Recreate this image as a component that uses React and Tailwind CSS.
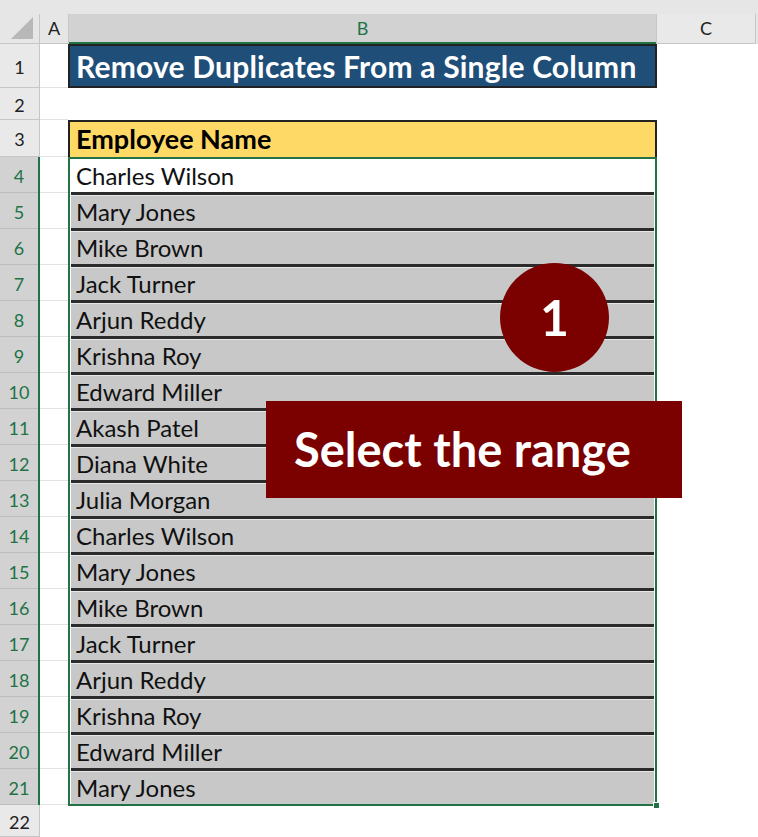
import React from "react";

const names = [
  "Charles Wilson",
  "Mary Jones",
  "Mike Brown",
  "Jack Turner",
  "Arjun Reddy",
  "Krishna Roy",
  "Edward Miller",
  "Akash Patel",
  "Diana White",
  "Julia Morgan",
  "Charles Wilson",
  "Mary Jones",
  "Mike Brown",
  "Jack Turner",
  "Arjun Reddy",
  "Krishna Roy",
  "Edward Miller",
  "Mary Jones",
];

const font = { fontFamily: "Lato, 'Open Sans', sans-serif" };

const RowLabel = ({ n, h, selected }) => (
  <div
    className={`flex items-center justify-center pt-[3px] border-b border-r border-[#c6c6c6] text-[18px] ${h} ${
      selected ? "bg-[#d2d2d2] text-[#217346]" : "bg-[#e9e9e9] text-[#222]"
    }`}
  >
    {n}
  </div>
);

const App = () => {
  return (
    <div className="relative w-[758px] h-[837px] overflow-hidden bg-white" style={font}>
      {/* top strip */}
      <div className="h-[14px] bg-[#e6e6e6]" />

      {/* column headers */}
      <div className="flex h-[30px] text-[18px] text-[#222]">
        <div className="w-[40px] relative bg-[#e6e6e6] border-r border-b border-[#c6c6c6]">
          <div className="absolute right-[6px] bottom-[4px] w-0 h-0 border-l-[22px] border-l-transparent border-b-[22px] border-b-[#b8b8b8]" />
        </div>
        <div className="w-[29px] flex items-center justify-center bg-[#e6e6e6] border-r border-b border-[#c6c6c6]">
          A
        </div>
        <div className="w-[587px] flex items-center justify-center bg-[#d2d2d2] text-[#217346] border-b-2 border-[#217346]">
          B
        </div>
        <div className="w-[100px] flex items-center justify-center bg-[#e9e9e9] border-x border-b border-[#c6c6c6]">
          C
        </div>
        <div className="flex-1 bg-[#e6e6e6]" />
      </div>

      {/* body */}
      <div className="flex">
        {/* row headers */}
        <div className="w-[40px] flex flex-col">
          <RowLabel n={1} h="h-[44px]" />
          <RowLabel n={2} h="h-[32px]" />
          <RowLabel n={3} h="h-[37px]" />
          <div className="border-r-2 border-[#217346] flex flex-col">
            {names.map((_, i) => (
              <div
                key={i}
                className="h-[36px] flex items-center justify-center pt-[4px] bg-[#d2d2d2] text-[#217346] text-[18px] border-b border-[#bdbdbd]"
              >
                {i + 4}
              </div>
            ))}
          </div>
          <RowLabel n={22} h="h-[32px]" />
        </div>

        {/* column A */}
        <div className="w-[28px] flex flex-col">
          <div className="h-[44px] border-b border-[#e2e2e2]" />
          <div className="h-[32px] border-b border-[#e2e2e2]" />
          <div className="h-[37px] border-b border-[#e2e2e2]" />
          {names.map((_, i) => (
            <div key={i} className="h-[36px] border-b border-[#e2e2e2]" />
          ))}
        </div>

        {/* column B */}
        <div className="w-[589px] flex flex-col">
          <div className="h-[44px] bg-[#1f4e79] border-2 border-[#222] flex items-center pl-[6px] text-white font-bold text-[30px] tracking-[0.2px] whitespace-nowrap">
            Remove Duplicates From a Single Column
          </div>
          <div className="h-[32px]" />
          <div className="h-[37px] bg-[#ffd966] border-2 border-b-0 border-[#222] flex items-center pl-[6px] text-black font-bold text-[27px]">
            Employee Name
          </div>
          <div className="relative border-2 border-[#217346] px-[1px]">
            {names.map((name, i) => (
              <div
                key={i}
                className={
                  i === names.length - 1
                    ? "h-[33px]"
                    : "h-[36px] border-b-[3px] border-[#2b2b2b]"
                }
              >
                <div
                  className={`h-full flex items-center pl-[5px] text-[24px] text-[#111] ${
                    i === 0 ? "bg-white" : "bg-[#c8c8c8] border-t border-[#e8e8e8]"
                  }`}
                >
                  {name}
                </div>
              </div>
            ))}
            <div className="absolute -right-[5px] -bottom-[5px] w-[7px] h-[7px] bg-[#217346] border border-white" />
          </div>
        </div>

        {/* column C */}
        <div className="w-[100px] flex flex-col">
          <div className="h-[44px]" />
        </div>
      </div>

      {/* callouts */}
      <div className="absolute left-[500px] top-[263px] w-[109px] h-[109px] rounded-full bg-[#7b0000] flex items-center justify-center text-white font-bold text-[50px]">
        1
      </div>
      <div className="absolute left-[266px] top-[401px] w-[416px] h-[97px] bg-[#7b0000] flex items-center pl-[28px] text-white font-bold text-[47px] whitespace-nowrap">
        Select the range
      </div>
    </div>
  );
};

export default App;
